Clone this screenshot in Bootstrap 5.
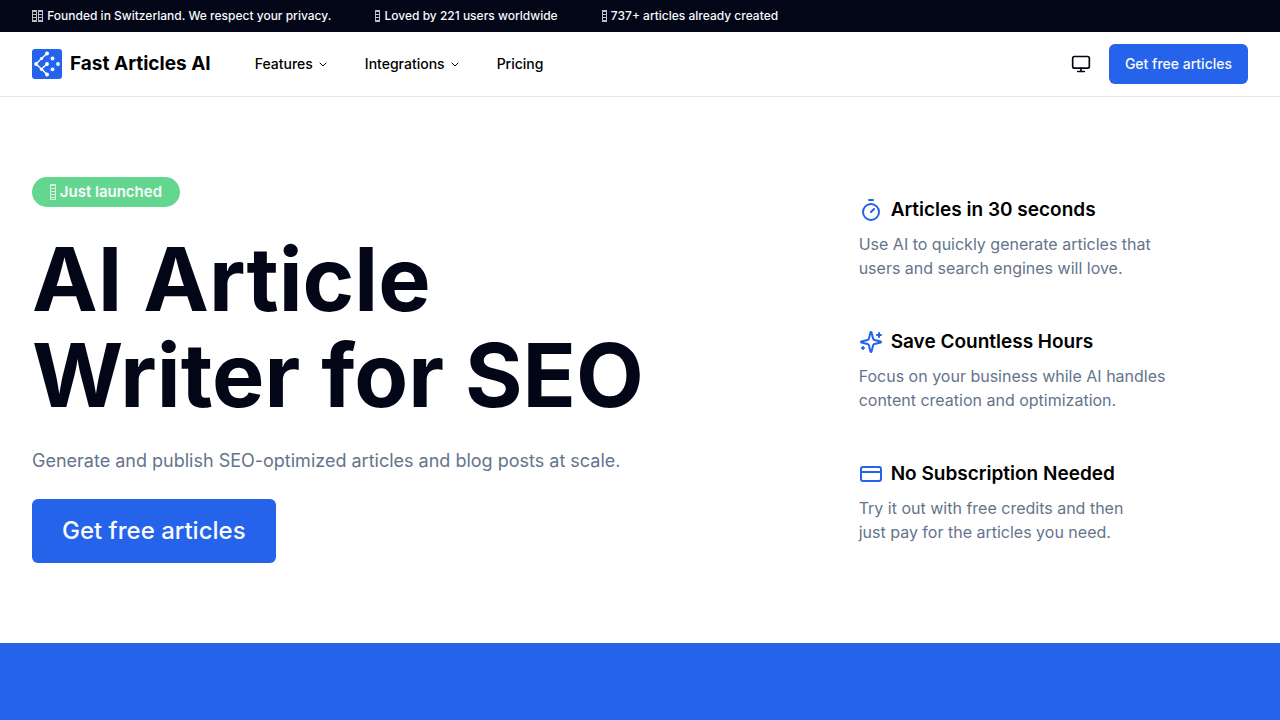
<!DOCTYPE html>
<html lang="en">
<head>
<meta charset="utf-8">
<meta name="viewport" content="width=device-width, initial-scale=1">
<title>Fast Articles AI</title>
<link href="https://cdn.jsdelivr.net/npm/bootstrap@5.3.0/dist/css/bootstrap.min.css" rel="stylesheet">
<style>
  :root { --brand: #2563eb; --ink: #020617; --muted: #64748b; }
  body { font-family: Inter, "Liberation Sans", sans-serif; color: var(--ink); }
  .gutter { padding-left: 32px; padding-right: 32px; }
  .announce { background: var(--ink); color: #f8fafc; font-size: 12px; line-height: 16px; font-weight: 500; column-gap: 44px; }
  /* narrow box glyph with a mottled centre */
  .glyph-box { display: inline-block; width: 5px; height: 12px; margin-right: 1px; vertical-align: -2px; opacity: .75; border: 1px solid currentColor; background: repeating-linear-gradient(currentColor 0 1px, transparent 1px 3px); }
  .launch .glyph-box { width: 6px; height: 16px; margin-right: 0; vertical-align: -3px; }
  .site-nav { min-height: 65px; border-bottom: 1px solid #e2e8f0; }
  .site-nav .navbar-brand { font-size: 19px; line-height: 28px; font-weight: 700; color: #000; }
  .site-nav .nav-link { font-size: 14px; line-height: 20px; font-weight: 500; color: #000; }
  .main-links { margin-left: 44px; column-gap: 36px; }
  .btn-cta { --bs-btn-bg: #2563eb; --bs-btn-color: #f8fafc; --bs-btn-border-color: #2563eb; --bs-btn-hover-bg: #1d4ed8; --bs-btn-hover-color: #fff; --bs-btn-border-radius: 6px; --bs-btn-border-width: 0; --bs-btn-font-weight: 500; }
  .btn-nav { --bs-btn-font-size: 14px; --bs-btn-line-height: 20px; --bs-btn-padding-x: 16px; --bs-btn-padding-y: 10px; }
  .btn-hero { --bs-btn-font-size: 24px; --bs-btn-line-height: 32px; --bs-btn-padding-x: 30px; --bs-btn-padding-y: 16px; }
  .hero { padding-top: 80px; padding-bottom: 80px; }
  .launch { background: #63d78f; color: #f8fafc; font-size: 15px; line-height: 24px; font-weight: 600; padding: 3px 18px; }
  .hero h1 { font-size: 88px; line-height: 96px; font-weight: 700; }
  .hero-lead { font-size: 18px; line-height: 28px; color: var(--muted); }
  .features { row-gap: 48px; }
  .features h2 { font-size: 19px; line-height: 28px; font-weight: 600; color: #000; }
  .features p { font-size: 16px; line-height: 24px; color: var(--muted); max-width: 320px; }
  .features svg { color: var(--brand); }
  .band { background: var(--brand); min-height: 77px; }
</style>
</head>
<body>
<div class="announce gutter py-2 d-flex flex-wrap">
  <span><i class="glyph-box"></i><i class="glyph-box"></i> Founded in Switzerland. We respect your privacy.</span>
  <span><i class="glyph-box"></i> Loved by 221 users worldwide</span>
  <span><i class="glyph-box"></i> 737+ articles already created</span>
</div>

<nav class="site-nav navbar navbar-expand gutter py-0">
  <a class="navbar-brand d-flex align-items-center gap-2 p-0 m-0" href="#">
    <svg width="30" height="30" viewBox="0 0 30 30" aria-hidden="true">
      <rect width="30" height="30" rx="3" fill="#2563eb"/>
      <path d="M15 4.500 9.500 9.500 4 15l5.500 5L15 25.500M9.500 20l5.500-5" fill="none" stroke="#fff" stroke-width="1.400"/>
      <g fill="#fff"><circle cx="15" cy="4.500" r="2"/><circle cx="9.500" cy="9.500" r="1.600"/><circle cx="4" cy="15" r="1.900"/><circle cx="9.500" cy="20.300" r="1.600"/><circle cx="15" cy="25.500" r="2"/><circle cx="15" cy="15" r="1.900"/><circle cx="20.500" cy="9.500" r="1.900"/><circle cx="26" cy="15" r="1.900"/><circle cx="20.500" cy="20.300" r="1.900"/></g>
    </svg>
    Fast Articles AI
  </a>
  <ul class="main-links navbar-nav">
    <li class="nav-item"><a class="nav-link p-0 d-flex align-items-center gap-1" href="#">Features
      <svg width="12" height="12" viewBox="0 0 24 24" fill="none" stroke="currentColor" stroke-width="2" stroke-linecap="round" stroke-linejoin="round" aria-hidden="true"><path d="m6 10 6 6 6-6"/></svg></a></li>
    <li class="nav-item"><a class="nav-link p-0 d-flex align-items-center gap-1" href="#">Integrations
      <svg width="12" height="12" viewBox="0 0 24 24" fill="none" stroke="currentColor" stroke-width="2" stroke-linecap="round" stroke-linejoin="round" aria-hidden="true"><path d="m6 10 6 6 6-6"/></svg></a></li>
    <li class="nav-item"><a class="nav-link p-0" href="#">Pricing</a></li>
  </ul>
  <div class="ms-auto d-flex align-items-center">
    <button type="button" class="btn border-0 p-0 me-3 px-0 lh-1 d-flex" aria-label="Theme">
      <svg width="24" height="20" viewBox="0 0 24 24" fill="none" stroke="#020617" stroke-width="2" stroke-linecap="round" stroke-linejoin="round" aria-hidden="true"><rect x="2" y="3" width="20" height="14" rx="2"/><path d="M8 21h8M12 17v4"/></svg>
    </button>
    <button type="button" class="btn btn-cta btn-nav">Get free articles</button>
  </div>
</nav>

<main>
  <section class="hero gutter">
    <div class="row gx-4">
      <div class="col-8 d-flex flex-column align-items-start gap-4">
        <span class="launch rounded-pill"><i class="glyph-box"></i> Just launched</span>
        <h1 class="m-0">AI Article<br>Writer for SEO</h1>
        <p class="hero-lead m-0">Generate and publish SEO-optimized articles and blog posts at scale.</p>
        <button type="button" class="btn btn-cta btn-hero">Get free articles</button>
      </div>
      <div class="features col-4 d-flex flex-column justify-content-center">
        <article>
          <div class="d-flex align-items-center gap-2 mb-2">
            <svg width="24" height="24" viewBox="0 0 24 24" fill="none" stroke="currentColor" stroke-width="2" stroke-linecap="round" stroke-linejoin="round" aria-hidden="true"><path d="M10 2h4M12 14l3-3"/><circle cx="12" cy="14" r="8"/></svg>
            <h2 class="m-0">Articles in 30 seconds</h2>
          </div>
          <p class="m-0">Use AI to quickly generate articles that users and search engines will love.</p>
        </article>
        <article>
          <div class="d-flex align-items-center gap-2 mb-2">
            <svg width="24" height="24" viewBox="0 0 24 24" fill="none" stroke="currentColor" stroke-width="2" stroke-linecap="round" stroke-linejoin="round" aria-hidden="true"><path d="M9.937 15.500A2 2 0 0 0 8.500 14.063l-6.135-1.582a.5.5 0 0 1 0-.962L8.500 9.936A2 2 0 0 0 9.937 8.500l1.582-6.135a.5.5 0 0 1 .963 0L14.063 8.500A2 2 0 0 0 15.500 9.937l6.135 1.581a.5.5 0 0 1 0 .964L15.500 14.063a2 2 0 0 0-1.437 1.437l-1.582 6.135a.5.5 0 0 1-.963 0zM20 3v4M22 5h-4M4 17v2M5 18H3"/></svg>
            <h2 class="m-0">Save Countless Hours</h2>
          </div>
          <p class="m-0">Focus on your business while AI handles content creation and optimization.</p>
        </article>
        <article>
          <div class="d-flex align-items-center gap-2 mb-2">
            <svg width="24" height="24" viewBox="0 0 24 24" fill="none" stroke="currentColor" stroke-width="2" stroke-linecap="round" stroke-linejoin="round" aria-hidden="true"><rect x="2" y="5" width="20" height="14" rx="2"/><path d="M2 10h20"/></svg>
            <h2 class="m-0">No Subscription Needed</h2>
          </div>
          <p class="m-0">Try it out with free credits and then<br>just pay for the articles you need.</p>
        </article>
      </div>
    </div>
  </section>
  <section class="band"></section>
</main>
<script src="https://cdn.jsdelivr.net/npm/bootstrap@5.3.0/dist/js/bootstrap.bundle.min.js"></script>
</body>
</html>
